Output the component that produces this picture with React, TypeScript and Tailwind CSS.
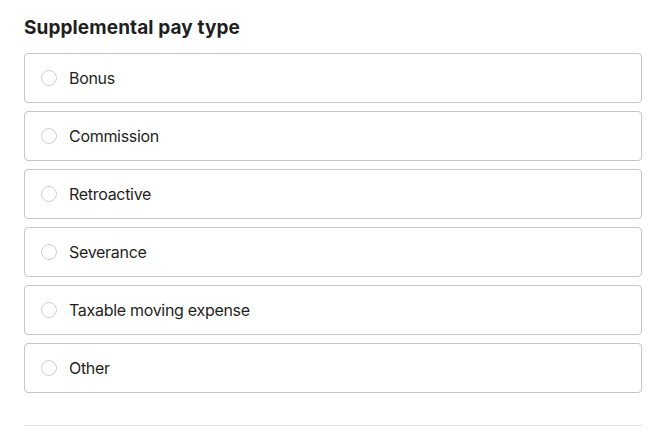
export default function App() {
  const options = ["Bonus", "Commission", "Retroactive", "Severance", "Taxable moving expense", "Other"];
  return (
    <div className="min-h-screen bg-white pl-6 pr-5 pt-[15px] text-[#1f1f23]" style={{ fontFamily: "Inter, 'Liberation Sans', sans-serif" }}>
      <h2 className="text-[19px] font-bold leading-[26px] tracking-[0.1px]">Supplemental pay type</h2>
      <div className="mt-3 flex flex-col gap-2">
        {options.map((o) => (
          <label key={o} className="flex h-[50px] items-center rounded border border-[#c4c4cb] pl-4">
            <span className="h-4 w-4 rounded-full border border-[#cfcfd4] bg-white" />
            <span className="ml-3 text-[16px] leading-5 tracking-[-0.3px]">{o}</span>
          </label>
        ))}
      </div>
      <div className="mt-8 h-px bg-[#e2e2e6]" />
    </div>
  );
}
